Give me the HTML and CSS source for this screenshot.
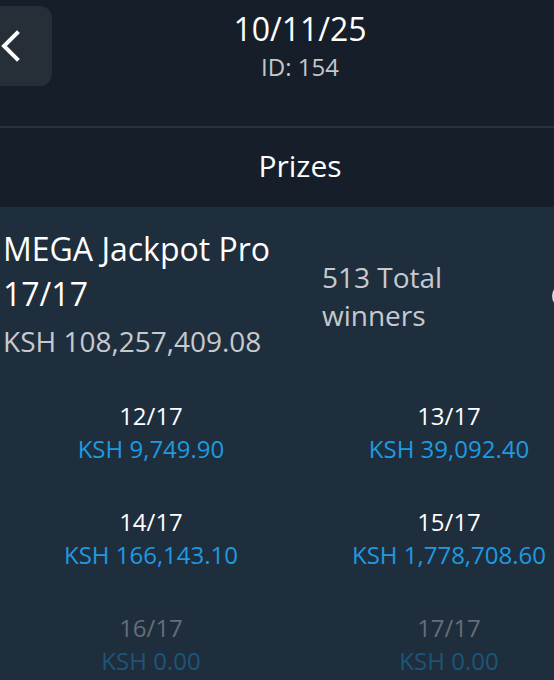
FILE: index.html
```html
<!DOCTYPE html>
<html lang="en">

<head>
    <meta charset="UTF-8">
    <meta name="viewport" content="width=device-width, initial-scale=1.0">
    <title>Jackpot results</title>
    <link rel="stylesheet" href="styles.css">
</head>

<body>
    <div class="page">
        <header class="topBar">
            <div class="topLeft">
                <button class="backButton" aria-label="Back">
                    <svg width="20" height="32" viewBox="0 0 20 32">
                        <path d="M17 3 L4 16 L17 29" fill="none" stroke="#fff" stroke-width="4" stroke-linecap="square" />
                    </svg>
                </button>
            </div>
            <div class="drawTitle">
                <div class="drawDate">10/11/25</div>
                <div class="drawId">ID: 154</div>
            </div>
            <div></div>
        </header>

        <div class="tabBar">Prizes</div>

        <section class="prizeContent">
            <div class="summary">
                <div class="jackpotInfo">
                    <div class="jackpotName">MEGA Jackpot Pro 17/17</div>
                    <div class="jackpotAmount">KSH 108,257,409.08</div>
                </div>
                <div class="winnersTotal">513 Total winners</div>
                <div class="moreIcon"></div>
            </div>

            <div class="prizeGrid">
                <div class="prizeItem">
                    <div class="prizeLabel">12/17</div>
                    <div class="prizeValue">KSH 9,749.90</div>
                </div>
                <div class="prizeItem">
                    <div class="prizeLabel">13/17</div>
                    <div class="prizeValue">KSH 39,092.40</div>
                </div>
                <div class="prizeItem">
                    <div class="prizeLabel">14/17</div>
                    <div class="prizeValue">KSH 166,143.10</div>
                </div>
                <div class="prizeItem">
                    <div class="prizeLabel">15/17</div>
                    <div class="prizeValue">KSH 1,778,708.60</div>
                </div>
                <div class="prizeItem empty">
                    <div class="prizeLabel">16/17</div>
                    <div class="prizeValue">KSH 0.00</div>
                </div>
                <div class="prizeItem empty">
                    <div class="prizeLabel">17/17</div>
                    <div class="prizeValue">KSH 0.00</div>
                </div>
            </div>
        </section>
    </div>
</body>

</html>
```

FILE: styles.css
```css
body {
    margin: 0;
    font-family: 'Open Sans', 'Noto Sans', sans-serif;
    background-color: #1f2e3d;
    color: #fff;
    overflow: hidden;
}

.page {
    width: 554px;
    overflow: hidden;
}

.topBar,
.tabBar,
.prizeContent {
    width: 600px;
}

.topBar {
    display: grid;
    grid-template-columns: 1fr auto 1fr;
    height: 126px;
    background-color: #161f29;
    border-bottom: 2px solid #29323c;
}

.backButton {
    width: 80px;
    height: 80px;
    margin: 6px 0 0 -28px;
    padding: 0 0 0 28px;
    border: none;
    border-radius: 12px;
    background-color: #262e38;
    display: flex;
    align-items: center;
    justify-content: flex-start;
    cursor: pointer;
}

.drawTitle {
    text-align: center;
    padding-top: 9px;
}

.drawDate {
    font-size: 32px;
    line-height: 40px;
}

.drawId {
    font-size: 24px;
    line-height: 30px;
    margin-top: 3px;
    color: #c3c7cc;
}

.tabBar {
    height: 79px;
    box-sizing: border-box;
    padding-bottom: 4px;
    display: flex;
    align-items: center;
    justify-content: center;
    background-color: #161f29;
    font-size: 30px;
}

.summary {
    display: flex;
    align-items: center;
    padding: 19px 0 0 3px;
}

.jackpotInfo {
    width: 300px;
}

.jackpotName {
    font-size: 32px;
    line-height: 45px;
}

.jackpotAmount {
    margin-top: 7px;
    font-size: 28px;
    line-height: 36px;
    color: #c6cacf;
}

.winnersTotal {
    width: 160px;
    margin: 7px 0 0 19px;
    font-size: 28px;
    line-height: 38px;
    color: #c6cacf;
}

.moreIcon {
    width: 20px;
    height: 20px;
    margin: 6px 0 0 70px;
    border: 2px solid #d0d4d8;
    border-radius: 50%;
}

.prizeGrid {
    display: grid;
    grid-template-columns: 298px 298px;
    row-gap: 40px;
    margin-top: 40px;
    padding-left: 2px;
}

.prizeItem {
    text-align: center;
    font-size: 24px;
    line-height: 33px;
}

.prizeValue {
    color: #1e9ae0;
}

.empty .prizeLabel {
    color: #666e77;
}

.empty .prizeValue {
    color: #1d5579;
}
```
